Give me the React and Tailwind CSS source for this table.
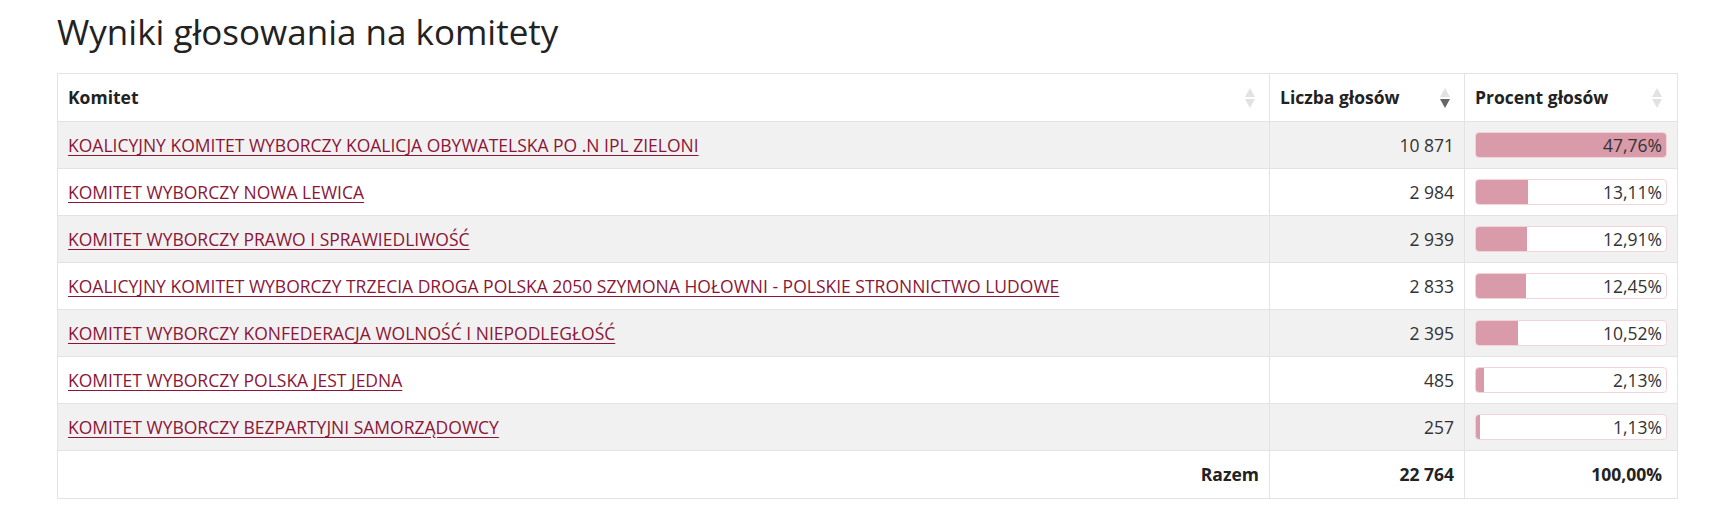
const rows = [
  { name: 'KOALICYJNY KOMITET WYBORCZY KOALICJA OBYWATELSKA PO .N IPL ZIELONI', votes: '10 871', pct: 47.76 },
  { name: 'KOMITET WYBORCZY NOWA LEWICA', votes: '2 984', pct: 13.11 },
  { name: 'KOMITET WYBORCZY PRAWO I SPRAWIEDLIWOŚĆ', votes: '2 939', pct: 12.91 },
  { name: 'KOALICYJNY KOMITET WYBORCZY TRZECIA DROGA POLSKA 2050 SZYMONA HOŁOWNI - POLSKIE STRONNICTWO LUDOWE', votes: '2 833', pct: 12.45 },
  { name: 'KOMITET WYBORCZY KONFEDERACJA WOLNOŚĆ I NIEPODLEGŁOŚĆ', votes: '2 395', pct: 10.52 },
  { name: 'KOMITET WYBORCZY POLSKA JEST JEDNA', votes: '485', pct: 2.13 },
  { name: 'KOMITET WYBORCZY BEZPARTYJNI SAMORZĄDOWCY', votes: '257', pct: 1.13 },
];

const max = 47.76;

function SortIcon({ active }) {
  return (
    <span className="flex flex-col items-center gap-[2px]">
      <svg width="10" height="9" viewBox="0 0 10 9">
        <path d="M5 0 L10 9 L0 9 Z" fill="#e2e2e2" />
      </svg>
      <svg width="10" height="9" viewBox="0 0 10 9">
        <path d="M0 0 L10 0 L5 9 Z" fill={active ? '#666666' : '#e2e2e2'} />
      </svg>
    </span>
  );
}

function Bar({ pct }) {
  const w = (pct / max) * 100;
  return (
    <div className="relative h-[26px] w-full rounded-[4px] border border-[#f2d3da] bg-white overflow-hidden">
      <div className="absolute inset-y-0 left-0 bg-[#d99aa9]" style={{ width: `${w}%` }} />
      <span className="relative flex h-full items-center justify-end pr-[4px] text-[17.5px] text-[#333]">
        {pct.toFixed(2).replace('.', ',')}%
      </span>
    </div>
  );
}

export default function App() {
  return (
    <div className="min-h-[527px] bg-white pl-[57px] pr-[37px] pt-[11px] font-['Open_Sans',sans-serif] text-[#222]">
      <h1 className="text-[35px] font-normal leading-[1.2] text-[#222]">Wyniki głosowania na komitety</h1>
      <table className="mt-[20px] w-[1620px] table-fixed border-collapse border border-[#e3e3e3] text-[17.5px]">
        <colgroup>
          <col className="w-[1212px]" />
          <col className="w-[195px]" />
          <col className="w-[213px]" />
        </colgroup>
        <thead>
          <tr className="h-[48px]">
            <th className="border border-[#e3e3e3] pl-[10px] pr-[14px] text-left font-bold">
              <div className="flex items-center justify-between">
                <span>Komitet</span>
                <SortIcon />
              </div>
            </th>
            <th className="border border-[#e3e3e3] pl-[10px] pr-[14px] text-left font-bold">
              <div className="flex items-center justify-between">
                <span>Liczba głosów</span>
                <SortIcon active />
              </div>
            </th>
            <th className="border border-[#e3e3e3] pl-[10px] pr-[15px] text-left font-bold">
              <div className="flex items-center justify-between">
                <span>Procent głosów</span>
                <SortIcon />
              </div>
            </th>
          </tr>
        </thead>
        <tbody>
          {rows.map((r, i) => (
            <tr key={r.name} className={`h-[47px] ${i % 2 === 0 ? 'bg-[#f1f1f1]' : 'bg-white'}`}>
              <td className="border border-[#e3e3e3] px-[10px]">
                <a href="#" className="text-[#8c1537] underline decoration-[#8c1537] underline-offset-[3px]">
                  {r.name}
                </a>
              </td>
              <td className="border border-[#e3e3e3] px-[10px] text-right text-[#333]">{r.votes}</td>
              <td className="border border-[#e3e3e3] px-[10px]">
                <Bar pct={r.pct} />
              </td>
            </tr>
          ))}
          <tr className="h-[48px] bg-white font-bold">
            <td className="border border-[#e3e3e3] px-[10px] text-right">Razem</td>
            <td className="border border-[#e3e3e3] px-[10px] text-right">22 764</td>
            <td className="border border-[#e3e3e3] px-[15px] text-right">100,00%</td>
          </tr>
        </tbody>
      </table>
    </div>
  );
}
